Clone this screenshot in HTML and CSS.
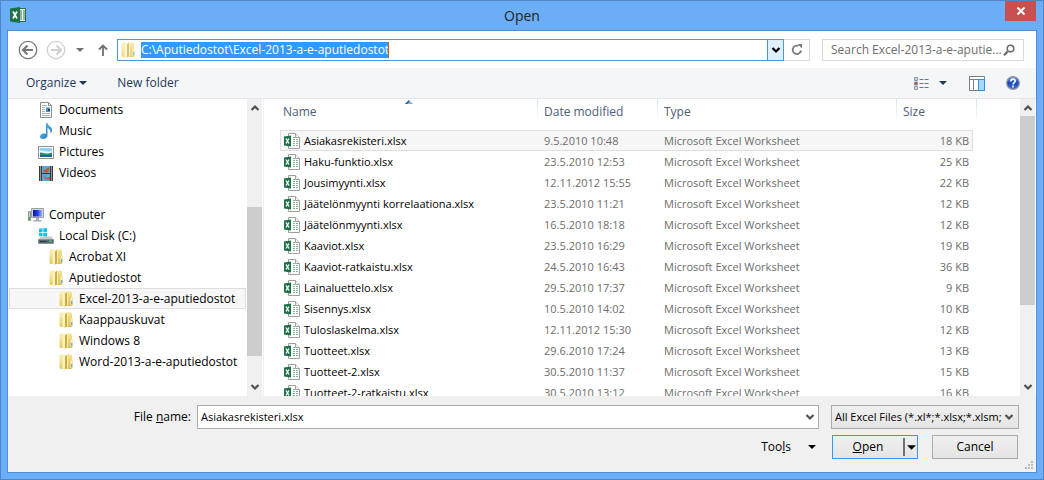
FILE: index.html
```
<!DOCTYPE html>
<html lang="en">
<head>
<meta charset="utf-8">
<title>Open</title>
<link rel="stylesheet" href="styles.css">
</head>
<body>
<svg class="defs" aria-hidden="true">
  <defs>
    <linearGradient id="g-folder" x1="0" x2="0" y1="0" y2="1"><stop offset="0" stop-color="#faf2b8"/><stop offset="1" stop-color="#e6c95f"/></linearGradient>
    <linearGradient id="g-flap" x1="0" x2="0" y1="0" y2="1"><stop offset="0" stop-color="#f5e596"/><stop offset="1" stop-color="#dfbd4c"/></linearGradient>
    <linearGradient id="g-help" x1="0" x2="0" y1="0" y2="1"><stop offset="0" stop-color="#6f97e8"/><stop offset=".5" stop-color="#1b46b8"/><stop offset="1" stop-color="#3b6fd8"/></linearGradient>
    <linearGradient id="g-note" x1="0" x2="1" y1="0" y2="1"><stop offset="0" stop-color="#6cc4ee"/><stop offset="1" stop-color="#0d72bd"/></linearGradient>
    <linearGradient id="g-screen" x1="0" x2="1" y1="0" y2="0"><stop offset="0" stop-color="#0713b8"/><stop offset=".5" stop-color="#2440e0"/><stop offset="1" stop-color="#8fb2f5"/></linearGradient>
    <symbol id="folder" viewBox="0 0 16 16">
      <path d="M1.500 1.500L2.500.5H7l1 1V15H2.500l-1-1z" fill="url(#g-folder)"/>
      <path d="M8 .5h5l1 1V6l.5.5V14l-1 1H8z" fill="url(#g-flap)"/>
      <path d="M6.500 3L9 1v13l-2.500 2z" fill="#cfab42"/>
      <path d="M4.500 2.500L7 1.500v14l-2.500-1z" fill="#fbf4c2"/>
      <path d="M9 1h1v13.500H9z" fill="#faf0b4"/>
      <path d="M12.500 6.500h1.500V14h-1.500z" fill="#f8edb4"/>
      <path d="M13 10h1.300v3.500H13z" fill="#5fb4e6"/>
    </symbol>
    <symbol id="sheet" viewBox="0 0 16 16">
      <path d="M4.500.5h7l4 4v11h-11z" fill="#fff" stroke="#a0a0a0"/>
      <path d="M11.500.5v4h4" fill="#f4f4f4" stroke="#a0a0a0"/>
      <path d="M9 6.500h2m1 0h2M9 8.500h2m1 0h2M9 10.500h2m1 0h2M9 12.500h2m1 0h2" stroke="#7fb795"/>
      <path d="M9 4.500h2" stroke="#7fb795"/>
      <path d="M0 3.500L7 2.500v11L0 12.500z" fill="#1d7245"/>
      <path d="M2 5.500l3 5M5 5.500l-3 5" stroke="#fff" stroke-width="1.400"/>
    </symbol>
    <symbol id="excel" viewBox="0 0 16 16">
      <path d="M9 1.500h6.500v13H9z" fill="#fff" stroke="#1d7245"/>
      <path d="M10 4h2m1 0h2M10 6h2m1 0h2M10 8h2m1 0h2M10 10h2m1 0h2M10 12h2m1 0h2" stroke="#1d7245"/>
      <path d="M0 1.500L10 0v16L0 14.500z" fill="#1d7245"/>
      <path d="M3 4.500l4 7M7 4.500l-4 7" stroke="#fff" stroke-width="1.700"/>
    </symbol>
    <symbol id="chevron" viewBox="0 0 10 8">
      <path d="M1.500 2L5 5.500 8.500 2" fill="none" stroke="currentColor" stroke-width="2.200"/>
    </symbol>
    <symbol id="tri" viewBox="0 0 8 4"><path d="M0 0h8L4 4z" fill="currentColor"/></symbol>
  </defs>
</svg>

<main class="window">
  <header class="titlebar">
    <svg class="ico"><use href="#excel"/></svg>
    <h1 class="title">Open</h1>
    <button class="close" aria-label="Close"><svg width="10" height="8" viewBox="0 0 10 8"><path d="M1.500.5l7 7M8.500.5l-7 7" stroke="#fff" stroke-width="2"/></svg></button>
  </header>

  <section class="frame">
    <nav class="navbar">
      <button class="plain back" aria-label="Back"><svg width="20" height="20" viewBox="0 0 20 20" fill="none" stroke="#787878"><circle cx="10" cy="10" r="8.700" stroke-width="1.300"/><path d="M5.500 10H15M9.500 5.500L5 10l4.500 4.500" stroke-width="2.200"/></svg></button>
      <button class="plain forward" aria-label="Forward"><svg width="20" height="20" viewBox="0 0 20 20" fill="none" stroke="#d0d0d0"><circle cx="10" cy="10" r="8.700" stroke-width="1.300"/><path d="M5 10h9.500M10.500 5.500L15 10l-4.500 4.500" stroke-width="2.200"/></svg></button>
      <button class="plain recent" aria-label="Recent locations"><svg class="tri"><use href="#tri"/></svg></button>
      <button class="plain up" aria-label="Up"><svg width="10" height="12" viewBox="0 0 10 12" fill="none" stroke="#707070" stroke-width="1.800"><path d="M5 12V1.500M1 5.500l4-4 4 4"/></svg></button>
      <div class="address">
        <div class="path">
          <svg class="ico faded"><use href="#folder"/></svg>
          <input class="path-text" aria-label="Address" value="C:\Aputiedostot\Excel-2013-a-e-aputiedostot">
        </div>
        <button class="drop" aria-label="Previous locations"><svg class="chev"><use href="#chevron"/></svg></button>
        <button class="refresh" aria-label="Refresh"><svg width="12" height="12" viewBox="0 0 12 12"><path d="M7.500 2A4.200 4.200 0 1 0 10 6.500" fill="none" stroke="#7a7a7a" stroke-width="1.800"/><path d="M6.500 0h4.500v4.500z" fill="#7a7a7a"/></svg></button>
      </div>
      <div class="search">
        <input class="search-text" aria-label="Search" placeholder="Search Excel-2013-a-e-aputie...">
        <svg width="12" height="12" viewBox="0 0 12 12" fill="none" stroke="#6c6c6c"><circle cx="7.500" cy="4.500" r="3.300" stroke-width="1.600"/><path d="M5 7L1 11.300" stroke-width="2.200"/></svg>
      </div>
    </nav>

    <div class="commands">
      <button class="plain organize">Organize <svg class="tri"><use href="#tri"/></svg></button>
      <button class="plain">New folder</button>
      <span class="grow"></span>
      <button class="plain views" aria-label="Change your view">
        <svg width="15" height="13" viewBox="0 0 15 13"><path d="M.5.500h3v3h-3zM.5 5h3v3h-3zM.5 9.500h3v3h-3z" fill="#fff" stroke="#8b97a5"/><path d="M1.500 1.500h1v1h-1z" fill="#2b7a4b"/><path d="M1 5.500h2v2H1z" fill="#e02020"/><path d="M1.500 10.500h1v1h-1z" fill="#2f6fd0"/><path d="M5.500 2.500h4m1 0h4M5.500 6.500h4m1 0h4M5.500 10.500h4m1 0h4" stroke="#66788c"/></svg>
        <svg class="tri"><use href="#tri"/></svg>
      </button>
      <button class="plain preview" aria-label="Show the preview pane"><svg width="16" height="15" viewBox="0 0 16 15"><path d="M.5.500h15v14H.5z" fill="#fff" stroke="#76808a"/><path d="M1 3.500h14M4.500 3.500v11" stroke="#76808a"/><path d="M9.500 3.500h6v11h-6z" fill="#a9d6fb" stroke="#2f8fe0"/></svg></button>
      <button class="plain" aria-label="Help"><svg width="14" height="14" viewBox="0 0 14 14"><circle cx="7" cy="7" r="6.300" fill="url(#g-help)" stroke="#8f959c" stroke-width="1.200"/><path d="M4.800 5.500c0-3.200 4.600-3 4.400-.3C9.100 6.700 7 6.700 7 8.600M7 9.600v1.800" fill="none" stroke="#fff" stroke-width="1.600"/></svg></button>
    </div>

    <div class="content">
      <aside class="side">
        <ul class="tree">
          <li class="node l2"><svg class="ico" viewBox="0 0 16 16"><path d="M2.500.5h8l3 3v12h-11z" fill="#fff" stroke="#8c8c8c"/><path d="M10.500.5v3h3" fill="none" stroke="#8c8c8c"/><path d="M4 3.500h5M4 5.500h3M4 7.500h3M4 9.500h3M4 11.500h8M4 13.500h8" stroke="#9fb0bd"/><path d="M8 5.500h4v4.500H8z" fill="#4e8fc9"/><path d="M10 7h2v2h-2z" fill="#123f7a"/></svg>Documents</li>
          <li class="node l2"><svg class="ico" viewBox="0 0 16 16"><path d="M8 0h1.500c.3 3 4.800 3.500 4.500 7.500-.2 1.800-1.200 2.500-1.500 3 .5-3-1-4.500-3-5.500V12c0 2.500-2 4-4.700 4S1.500 14 2.500 12.300 6 10 8 11z" fill="url(#g-note)"/></svg>Music</li>
          <li class="node l2"><svg class="ico" viewBox="0 0 16 16"><path d="M.5 2.500h15v12H.5z" fill="#fff" stroke="#8f8f8f"/><path d="M2 4h12v9H2z" fill="#8ed2f0"/><path d="M2 7c4-1 8 2 12 0v3H2z" fill="#e9f6fa"/><path d="M2 8.500c4 0 6 2.500 12 0v3H2z" fill="#2a8a6b"/><path d="M2 11h12v2H2z" fill="#1767a5"/></svg>Pictures</li>
          <li class="node l2"><svg class="ico" viewBox="0 0 16 16"><path d="M1 1h14v15H1z" fill="#3a3a3a"/><path d="M2.500 1.500V16M13.500 1.500V16" stroke="#eee" stroke-dasharray="1 1"/><path d="M4 1h8v7H4zM4 9h8v7H4z" fill="#58a8dd"/><path d="M5 4l2 1 4-3v4l-2 2-3-1zM5 11l4 2 3-1v3l-4-1z" fill="#c2552c"/></svg>Videos</li>
          <li class="node gap"></li>
          <li class="node l1"><svg class="ico" viewBox="0 0 16 16"><path d="M.5 4.500h2v9h-2z" fill="#c9ccce" stroke="#8f9498"/><path d="M1 10h1v3H1z" fill="#35b24a"/><path d="M3.500 1.500h12v9h-12z" fill="#d4d7da" stroke="#9aa0a5"/><path d="M5 3h9v6.500H5z" fill="url(#g-screen)"/><path d="M8 11h3v2h2.500v1.500h-8V13H8z" fill="#a8adb1"/></svg>Computer</li>
          <li class="node l2"><svg class="ico" viewBox="0 0 16 16"><path d="M1 .8l3.500-.5V4H1zM5.300.2L9 0v4H5.300zM1 4.800h3.500v3.500L1 8zM5.300 4.800H9V9l-3.700-.5z" fill="#12c3ec"/><path d="M2.500 8.500h11l2 3H.5z" fill="#c8cccf"/><path d="M.5 11.500h15v4H.5z" fill="#56656e" stroke="#89949b"/><path d="M2 13.500h6" stroke="#2d3a42"/><path d="M11.500 12.500h2v1.500h-2z" fill="#59e36d"/></svg>Local Disk (C:)</li>
          <li class="node l3"><svg class="ico"><use href="#folder"/></svg>Acrobat XI</li>
          <li class="node l3"><svg class="ico"><use href="#folder"/></svg>Aputiedostot</li>
          <li class="node l4 current"><svg class="ico"><use href="#folder"/></svg>Excel-2013-a-e-aputiedostot</li>
          <li class="node l4"><svg class="ico"><use href="#folder"/></svg>Kaappauskuvat</li>
          <li class="node l4"><svg class="ico"><use href="#folder"/></svg>Windows 8</li>
          <li class="node l4"><svg class="ico"><use href="#folder"/></svg>Word-2013-a-e-aputiedostot</li>
          <li class="node gap"></li>
          <li class="node l1"><svg class="ico" viewBox="0 0 16 16"><circle cx="5" cy="3" r="4" fill="#6f93bd"/></svg></li>
        </ul>
        <div class="scroll">
          <svg class="chev flip"><use href="#chevron"/></svg>
          <div class="track side-track"><div class="thumb"></div></div>
          <svg class="chev"><use href="#chevron"/></svg>
        </div>
      </aside>

      <section class="list">
        <div class="rows">
          <table class="files">
            <colgroup><col class="c-name"><col class="c-date"><col class="c-type"><col class="c-size"><col class="c-end"></colgroup>
            <thead><tr><th>Name<svg class="sort" viewBox="0 0 8 4"><path d="M0 4h8L4 0z" fill="#7eb3cf"/><path d="M0 4l4-4v2L2 4z" fill="#2f5873"/></svg></th><th>Date modified</th><th>Type</th><th class="size">Size</th><th class="end"></th></tr></thead>
            <tbody>
              <tr class="picked"><td><svg class="ico"><use href="#sheet"/></svg>Asiakasrekisteri.xlsx</td><td>9.5.2010 10:48</td><td>Microsoft Excel Worksheet</td><td>18 KB</td></tr>
              <tr><td><svg class="ico"><use href="#sheet"/></svg>Haku-funktio.xlsx</td><td>23.5.2010 12:53</td><td>Microsoft Excel Worksheet</td><td>25 KB</td></tr>
              <tr><td><svg class="ico"><use href="#sheet"/></svg>Jousimyynti.xlsx</td><td>12.11.2012 15:55</td><td>Microsoft Excel Worksheet</td><td>22 KB</td></tr>
              <tr><td><svg class="ico"><use href="#sheet"/></svg>Jäätelönmyynti korrelaationa.xlsx</td><td>23.5.2010 11:21</td><td>Microsoft Excel Worksheet</td><td>12 KB</td></tr>
              <tr><td><svg class="ico"><use href="#sheet"/></svg>Jäätelönmyynti.xlsx</td><td>16.5.2010 18:18</td><td>Microsoft Excel Worksheet</td><td>12 KB</td></tr>
              <tr><td><svg class="ico"><use href="#sheet"/></svg>Kaaviot.xlsx</td><td>23.5.2010 16:29</td><td>Microsoft Excel Worksheet</td><td>19 KB</td></tr>
              <tr><td><svg class="ico"><use href="#sheet"/></svg>Kaaviot-ratkaistu.xlsx</td><td>24.5.2010 16:43</td><td>Microsoft Excel Worksheet</td><td>36 KB</td></tr>
              <tr><td><svg class="ico"><use href="#sheet"/></svg>Lainaluettelo.xlsx</td><td>29.5.2010 17:37</td><td>Microsoft Excel Worksheet</td><td>9 KB</td></tr>
              <tr><td><svg class="ico"><use href="#sheet"/></svg>Sisennys.xlsx</td><td>10.5.2010 14:02</td><td>Microsoft Excel Worksheet</td><td>10 KB</td></tr>
              <tr><td><svg class="ico"><use href="#sheet"/></svg>Tuloslaskelma.xlsx</td><td>12.11.2012 15:30</td><td>Microsoft Excel Worksheet</td><td>12 KB</td></tr>
              <tr><td><svg class="ico"><use href="#sheet"/></svg>Tuotteet.xlsx</td><td>29.6.2010 17:24</td><td>Microsoft Excel Worksheet</td><td>13 KB</td></tr>
              <tr><td><svg class="ico"><use href="#sheet"/></svg>Tuotteet-2.xlsx</td><td>30.5.2010 11:37</td><td>Microsoft Excel Worksheet</td><td>15 KB</td></tr>
              <tr><td><svg class="ico"><use href="#sheet"/></svg>Tuotteet-2-ratkaistu.xlsx</td><td>30.5.2010 13:12</td><td>Microsoft Excel Worksheet</td><td>16 KB</td></tr>
            </tbody>
          </table>
        </div>
        <div class="scroll">
          <svg class="chev flip"><use href="#chevron"/></svg>
          <div class="track list-track"><div class="thumb"></div></div>
          <svg class="chev"><use href="#chevron"/></svg>
        </div>
      </section>
    </div>

    <form class="footer">
      <div class="line">
        <label class="name-label" for="fname">File <u>n</u>ame:</label>
        <div class="combo">
          <input id="fname" class="combo-text" value="Asiakasrekisteri.xlsx">
          <button type="button" class="plain" aria-label="Recent file names"><svg class="chev"><use href="#chevron"/></svg></button>
        </div>
        <div class="filter">
          <select class="filter-select" aria-label="File type"><option>All Excel Files (*.xl*;*.xlsx;*.xlsm;</option></select>
          <svg class="chev"><use href="#chevron"/></svg>
        </div>
      </div>
      <div class="line actions">
        <button type="button" class="plain tools"><span>Too<u>l</u>s</span><svg class="tri"><use href="#tri"/></svg></button>
        <div class="split">
          <button type="button" class="plain open"><span><u>O</u>pen</span></button>
          <button type="button" class="plain more" aria-label="Open options"><svg class="tri big"><use href="#tri"/></svg></button>
        </div>
        <button type="button" class="cancel">Cancel</button>
      </div>
      <svg class="grip" width="9" height="9" viewBox="0 0 9 9"><path d="M6 0h2v2H6zM3 3h2v2H3zM6 3h2v2H6zM0 6h2v2H0zM3 6h2v2H3zM6 6h2v2H6z" fill="#bcbcbc"/></svg>
    </form>
  </section>
</main>
</body>
</html>
```
FILE: styles.css
```
* { box-sizing: border-box; }
html, body { height: 100%; }
body, button, input, select {
  font: 12px/16px "Segoe UI", "Open Sans", "Noto Sans", sans-serif;
  color: #000;
}
body { margin: 0; }
button, input, select { margin: 0; padding: 0; border: 0; border-radius: 0; background: none; }
input { min-width: 0; outline: 0; }
svg { display: block; flex: none; }
.defs { position: absolute; width: 0; height: 0; }
.ico { width: 16px; height: 16px; }
.tri { width: 8px; height: 4px; }
.chev { width: 10px; height: 8px; color: #505050; }
.flip { transform: rotate(180deg); }
.plain { display: flex; align-items: center; white-space: nowrap; }
.grow { flex: 1; }

.window {
  display: flex; flex-direction: column;
  height: 100vh;
  padding: 0 7px 7px;
  border: 1px solid #4f86c6;
  background: #6badf6;
}
.titlebar { display: grid; grid-template-columns: 46px 1fr 46px; height: 29px; flex: none; }
.titlebar .ico { margin: 6px 0 0 2px; }
.title { margin: 0; font-size: 14px; line-height: 29px; font-weight: 400; text-align: center; color: #222; }
.close { display: grid; place-items: center; width: 31px; height: 20px; justify-self: end; background: #c75050; }
.frame {
  flex: 1; min-height: 0;
  display: flex; flex-direction: column;
  margin: 0 -1px -1px;
  border: 1px solid #4f8fd6;
  background: #fff;
}

.navbar { display: flex; align-items: center; height: 37px; flex: none; padding: 0 12px 0 10px; }
.back { margin-right: 8px; }
.forward { margin-right: 10px; }
.recent { color: #707070; margin-right: 14px; }
.up { margin-right: 9px; }
.address { flex: 1; display: flex; height: 22px; margin-right: 12px; min-width: 0; }
.path { flex: 1; display: flex; align-items: center; gap: 5px; min-width: 0; border: 1px solid #4a96e0; padding-left: 2px; }
.faded { opacity: .75; }
.path-text { width: 248px; height: 16px; field-sizing: content; background: #3399ff; color: #fff; border-right: 1px solid #cc6600; }
.drop { display: grid; place-items: center; width: 17px; margin-left: -1px; border: 1px solid #4a96e0; background: #e0effc; }
.drop .chev { color: #000; }
.refresh { display: grid; place-items: center; width: 26px; border: 1px solid #d9d9d9; border-left: 0; }
.search { display: flex; align-items: center; width: 202px; height: 22px; padding: 0 8px; border: 1px solid #d9d9d9; }
.search-text { flex: 1; }
.search-text::placeholder { color: #6d6d6d; opacity: 1; }

.commands { display: flex; align-items: center; height: 31px; flex: none; padding: 0 16px 0 18px; background: #f5f6f7; border-bottom: 1px solid #e4e8ec; }
.commands .plain { color: #1e395b; }
.organize { gap: 3px; margin-right: 30px; }
.views { gap: 10px; margin-right: 22px; }
.preview { margin-right: 21px; }

.content { flex: 1; display: flex; min-height: 0; overflow: hidden; }
.side { display: flex; width: 256px; border-right: 1px solid #f0f0f0; padding-right: 1px; flex: none; }
.tree { flex: 1; margin: 0; padding: 0 1px; list-style: none; overflow: hidden; min-width: 0; }
.node { display: flex; align-items: center; gap: 5px; height: 21px; border: 1px solid transparent; white-space: nowrap; }
.l1 { padding-left: 18px; }
.l2 { padding-left: 28px; }
.l3 { padding-left: 38px; }
.l4 { padding-left: 48px; }
.current { background: #f7f7f7; border-color: #dedede; }
.scroll { display: flex; flex-direction: column; align-items: center; width: 15px; flex: none; padding: 5px 0; background: #f0f0f0; }
.track { flex: 1; width: 100%; margin: 4px 0; display: flex; flex-direction: column; }
.thumb { background: #cdcdcd; }
.side-track { padding: 91px 0 23px; }
.side-track .thumb { flex: 1; }
.list-track .thumb { height: 72%; }

.list { flex: 1; display: flex; min-width: 0; padding: 0 1px 0 16px; }
.rows { flex: 1; min-width: 0; overflow: hidden; }
.files { width: 697px; table-layout: fixed; border-collapse: separate; border-spacing: 0; }
.c-name { width: 258px; }
.c-date { width: 120px; }
.c-type { width: 239px; }
.c-size { width: 76px; }
.c-end { width: 4px; }
.files th {
  position: relative; height: 31px; padding: 0 0 5px 6px;
  font-weight: 400; text-align: left; color: #4c607a;
  background: linear-gradient(#cfe2f3, #fff) right top / 1px 22px no-repeat;
}
.files th:first-child { padding-left: 3px; }
.files .size { background: none; }
.files .end { padding: 0; background: linear-gradient(#cfe2f3, #fff) right top / 1px 22px no-repeat; }
.sort { position: absolute; top: 1px; left: 50%; width: 8px; height: 4px; margin-left: -4px; }
.files td { height: 21px; padding: 0 0 0 6px; font-size: 11px; color: #6d6d6d; line-height: 16px; white-space: nowrap; }
.files td:first-child { padding-left: 4px; color: #000; }
.files td .ico { float: left; margin-right: 4px; }
.files td:last-child { text-align: right; padding-right: 4px; }
.files .picked td { padding-top: 1px; background: #f7f7f7; border: solid #dedede; border-width: 1px 0; }
.files .picked td:first-child { border-left-width: 1px; padding-left: 3px; }
.files .picked td:last-child { border-right-width: 1px; padding-right: 3px; }

.footer { position: relative; flex: none; display: flex; flex-direction: column; gap: 6px; padding: 9px 17px 13px; background: #f0f0f0; }
.line { display: flex; align-items: center; }
.name-label { width: 166px; text-align: right; margin-right: 6px; }
.combo { flex: 1; display: flex; height: 24px; min-width: 0; padding: 0 3px; border: 1px solid #ababab; background: #fff; margin-right: 12px; }
.combo-text { flex: 1; font-size: 11px; }
.filter { display: grid; grid-template-columns: 1fr 14px; align-items: center; width: 188px; height: 24px; border: 1px solid #ababab; background: linear-gradient(#f0f0f0, #e5e5e5); }
.filter-select { grid-area: 1 / 1 / 2 / 3; appearance: none; width: 100%; padding: 0 14px 0 3px; font-size: 11px; }
.filter .chev { grid-area: 1 / 2; pointer-events: none; }
.actions { justify-content: flex-end; padding-right: 1px; }
.tools { gap: 17px; margin-right: 16px; }
.split { display: flex; width: 86px; height: 24px; margin-right: 14px; border: 1px solid #3399ff; background: linear-gradient(#f0f0f0, #e5e5e5); }
.open { flex: 1; justify-content: center; }
.more { width: 14px; margin: 2px 0; border-left: 2px solid #707070; justify-content: center; }
.big { width: 9px; height: 5px; }
.cancel { width: 86px; height: 24px; border: 1px solid #ababab; background: linear-gradient(#f0f0f0, #e5e5e5); }
.grip { position: absolute; right: 2px; bottom: 2px; }
```
